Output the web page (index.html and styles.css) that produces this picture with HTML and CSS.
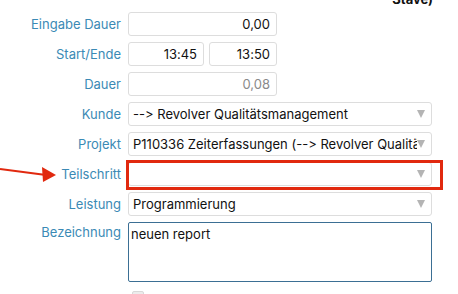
FILE: index.html
```html
<!DOCTYPE html>
<html lang="de">
<head>
    <meta charset="UTF-8">
    <meta name="viewport" content="width=device-width, initial-scale=1.0">
    <title>Zeiterfassung</title>
    <link rel="stylesheet" href="styles.css">
</head>
<body>
    <div class="page">
        <div class="head"><span>Stave)</span></div>

        <form class="form">
            <label class="lbl">Eingabe Dauer</label>
            <div class="field"><div class="box num w-full">0,00</div></div>

            <label class="lbl">Start/Ende</label>
            <div class="field pair">
                <div class="box num w-start">13:45</div>
                <div class="box num w-end">13:50</div>
            </div>

            <label class="lbl">Dauer</label>
            <div class="field"><div class="box num w-full muted">0,08</div></div>

            <label class="lbl">Kunde</label>
            <div class="field"><div class="box select"><span class="val">--&gt; Revolver Qualitätsmanagement</span><span class="caret"></span></div></div>

            <label class="lbl">Projekt</label>
            <div class="field"><div class="box select"><span class="val">P110336 Zeiterfassungen (--&gt; Revolver Qualitätsmanagement)</span><span class="caret"></span></div></div>

            <label class="lbl">Teilschritt</label>
            <div class="field"><div class="box select"><span class="val"></span><span class="caret"></span></div></div>

            <label class="lbl">Leistung</label>
            <div class="field"><div class="box select"><span class="val">Programmierung</span><span class="caret"></span></div></div>

            <label class="lbl top">Bezeichnung</label>
            <div class="field"><div class="box area">neuen report</div></div>

            <span></span>
            <div class="field"><span class="check"></span></div>
        </form>

        <!-- annotation overlays -->
        <div class="mark"></div>
        <svg class="arrow" width="60" height="20" viewBox="0 0 60 20">
            <line x1="0" y1="3" x2="46" y2="9" stroke="#e1290f" stroke-width="2.2"/>
            <polygon points="42,1 56,9 43,16" fill="#e1290f"/>
        </svg>
    </div>
</body>
</html>
```

FILE: styles.css
```css
* {
    box-sizing: border-box;
}
body {
    margin: 0;
    background: #fff;
    font-family: Inter, "Liberation Sans", Arial, sans-serif;
    font-size: 13px;
    font-feature-settings: "calt" 0, "liga" 0;
    font-variant-ligatures: none;
    color: #111;
}
.page {
    position: relative;
    width: 458px;
    height: 294px;
    overflow: hidden;
}
.head {
    height: 12px;
    overflow: hidden;
    padding-right: 25px;
    text-align: right;
}
.head span {
    display: block;
    margin-top: -8px;
    font-weight: bold;
    font-size: 13px;
    line-height: 14px;
}
.form {
    display: grid;
    grid-template-columns: 121px 1fr;
    column-gap: 7px;
    row-gap: 6px;
    margin: 0;
}
.lbl {
    text-align: right;
    color: #3b8ab5;
    line-height: 24px;
    white-space: nowrap;
}
.lbl.top {
    line-height: 20px;
}
.field {
    display: flex;
}
.pair {
    gap: 5px;
}
.box {
    height: 24px;
    border: 1px solid #dddddd;
    border-radius: 3px;
    background: #fff;
    line-height: 22px;
    white-space: nowrap;
    overflow: hidden;
}
.num {
    text-align: right;
    padding-right: 6px;
}
.w-full {
    width: 149px;
}
.w-start {
    width: 76px;
}
.w-end {
    width: 68px;
}
.muted {
    color: #8a8a8a;
}
.select {
    width: 304px;
    display: flex;
    align-items: center;
    padding-left: 4px;
    padding-right: 6px;
}
.select .val {
    flex: 1;
    overflow: hidden;
    white-space: nowrap;
}
.caret {
    flex: none;
    width: 0;
    height: 0;
    border-left: 4px solid transparent;
    border-right: 4px solid transparent;
    border-top: 8px solid #b4b4b4;
}
.area {
    width: 304px;
    height: 60px;
    border: 1px solid #3b6f94;
    border-radius: 2px;
    padding: 3px 2px;
    line-height: 16px;
}
.check {
    display: block;
    width: 12px;
    height: 12px;
    margin: 3px 0 0 4px;
    border: 1px solid #d8d8d8;
    border-radius: 2px;
    background: #ececec;
}
.mark {
    position: absolute;
    left: 126px;
    top: 160px;
    width: 317px;
    height: 30px;
    border: 3.5px solid #e1290f;
}
.arrow {
    position: absolute;
    left: 0;
    top: 166px;
}
```
